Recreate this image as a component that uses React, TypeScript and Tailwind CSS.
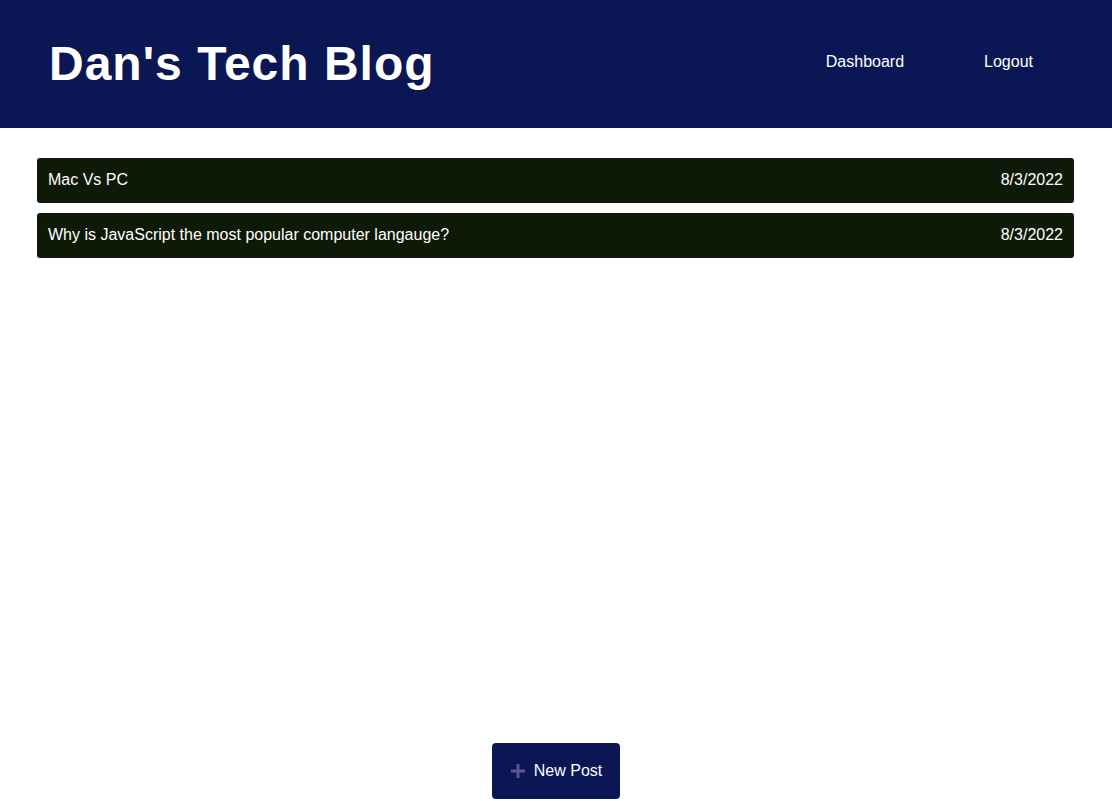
const posts = [
  { title: "Mac Vs PC", date: "8/3/2022" },
  { title: "Why is JavaScript the most popular computer langauge?", date: "8/3/2022" },
];

export default function App() {
  return (
    <div className="flex min-h-screen flex-col bg-white font-['Liberation_Sans',Arial,sans-serif]">
      <header className="flex h-[128px] items-center justify-between bg-[#0b1754] pl-[49px] pr-[79px] text-white">
        <h1 className="text-[48px] font-bold leading-none tracking-[1px]">Dan's Tech Blog</h1>
        <nav className="flex items-center gap-[80px] pb-[5px] text-base">
          <a href="#">Dashboard</a>
          <a href="#">Logout</a>
        </nav>
      </header>

      <main className="flex flex-1 flex-col gap-[10px] pl-[37px] pr-[38px] pt-[30px]">
        {posts.map((post) => (
          <div
            key={post.title}
            className="flex h-[45px] items-center justify-between rounded-[3px] bg-[#0f1907] px-[11px] pb-[2px] text-base text-white"
          >
            <span>{post.title}</span>
            <span>{post.date}</span>
          </div>
        ))}
      </main>

      <div className="flex justify-center pb-[2px]">
        <button className="flex h-[56px] w-[128px] items-center justify-center gap-[8px] rounded-[4px] bg-[#0b1754] text-base text-white">
          <svg width="16" height="16" viewBox="0 0 16 16" fill="none">
            <path d="M8 1v14M1 8h14" stroke="#5e5394" strokeWidth="3" />
          </svg>
          New Post
        </button>
      </div>
    </div>
  );
}
